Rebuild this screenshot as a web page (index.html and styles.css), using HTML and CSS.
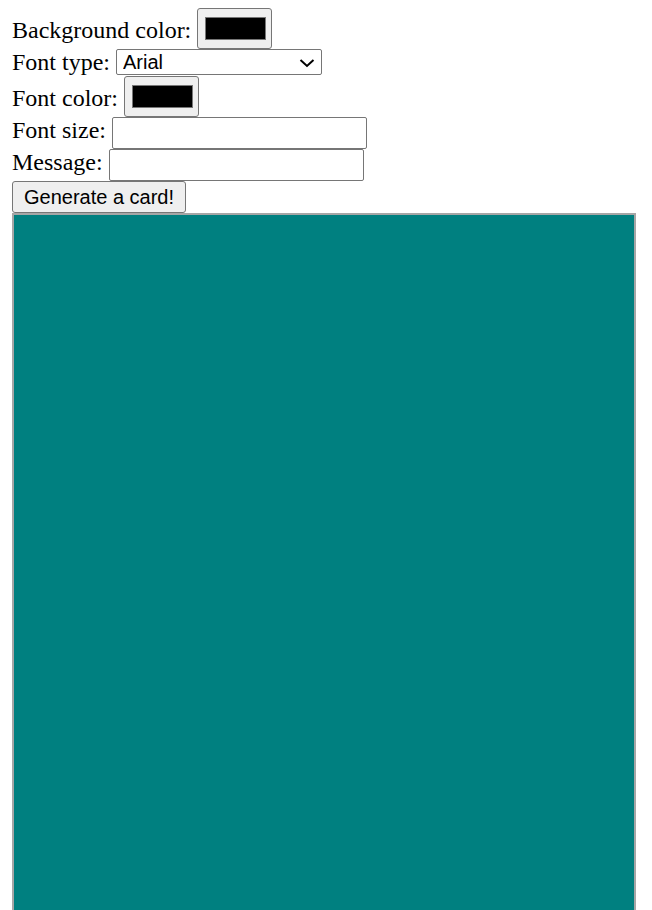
FILE: index.html
```html
<!DOCTYPE html>
<html>
<head>
<meta charset="utf-8">
<link rel="stylesheet" href="styles.css">
</head>
<body>
<form class="form">
  <div class="row row-tall">
    <label class="label" for="bg">Background color:</label>
    <input class="color" type="color" id="bg" value="#000000">
  </div>
  <div class="row row-select">
    <label class="label" for="font">Font type:</label>
    <span class="select-wrap">
      <select class="select" id="font">
        <option>Arial</option>
      </select>
      <svg class="chevron" width="16" height="10" viewBox="0 0 16 10"><polyline points="1.5,2 8,8 14.5,2" fill="none" stroke="#000" stroke-width="2"/></svg>
    </span>
  </div>
  <div class="row row-tall">
    <label class="label" for="fc">Font color:</label>
    <input class="color" type="color" id="fc" value="#000000">
  </div>
  <div class="row">
    <label class="label" for="fs">Font size:</label>
    <input class="text" type="text" id="fs">
  </div>
  <div class="row">
    <label class="label" for="msg">Message:</label>
    <input class="text" type="text" id="msg">
  </div>
  <button class="button" type="button">Generate a card!</button>
</form>
<canvas class="card" width="620" height="720"></canvas>
</body>
</html>
```
FILE: styles.css
```css
html, body {
  margin: 0;
  padding: 0;
  background: #fff;
}
body {
  padding: 8px 0 0 12px;
  font-family: "Liberation Serif", "Times New Roman", serif;
  color: #000;
}
.form {
  display: flex;
  flex-direction: column;
  align-items: flex-start;
  margin: 0;
}
.row {
  display: flex;
  align-items: flex-end;
  gap: 6px;
}
.row-select {
  align-items: flex-start;
}
.label {
  font-size: 24px;
  line-height: 27px;
  margin-bottom: 5px;
}
.row-select .label {
  margin-bottom: 0;
}
.color {
  -webkit-appearance: none;
  appearance: none;
  box-sizing: border-box;
  width: 75px;
  height: 41px;
  margin: 0;
  padding: 0;
  border: 1px solid #767676;
  border-radius: 3px;
  background: #efefef;
  cursor: default;
}
.color::-webkit-color-swatch-wrapper {
  padding: 8px 5px 8px 7px;
}
.color::-webkit-color-swatch {
  border: 1px solid #777;
  border-radius: 0;
}
.select-wrap {
  position: relative;
  display: block;
}
.select {
  -webkit-appearance: none;
  appearance: none;
  box-sizing: border-box;
  display: block;
  width: 206px;
  height: 26px;
  margin: 0;
  padding: 0 0 0 6px;
  border: 1px solid #767676;
  border-radius: 2px;
  background: #fff;
  font-family: "Liberation Sans", Arial, sans-serif;
  font-size: 20px;
  color: #000;
}
.chevron {
  position: absolute;
  right: 7px;
  top: 9px;
  pointer-events: none;
}
.text {
  box-sizing: border-box;
  width: 255px;
  height: 32px;
  margin: 0;
  padding: 1px 3px;
  border: 1px solid #767676;
  border-radius: 2px;
  background: #fff;
  font-family: "Liberation Sans", Arial, sans-serif;
  font-size: 20px;
}
.button {
  box-sizing: border-box;
  height: 32px;
  width: 174px;
  margin: 0;
  padding: 0 9px;
  border: 1px solid #767676;
  border-radius: 3px;
  background: #efefef;
  font-family: "Liberation Sans", Arial, sans-serif;
  font-size: 20px;
  color: #000;
  text-align: center;
}
.card {
  display: block;
  box-sizing: border-box;
  width: 624px;
  height: 720px;
  border: 2px solid #a6a6a6;
  background: #008080;
}
```
